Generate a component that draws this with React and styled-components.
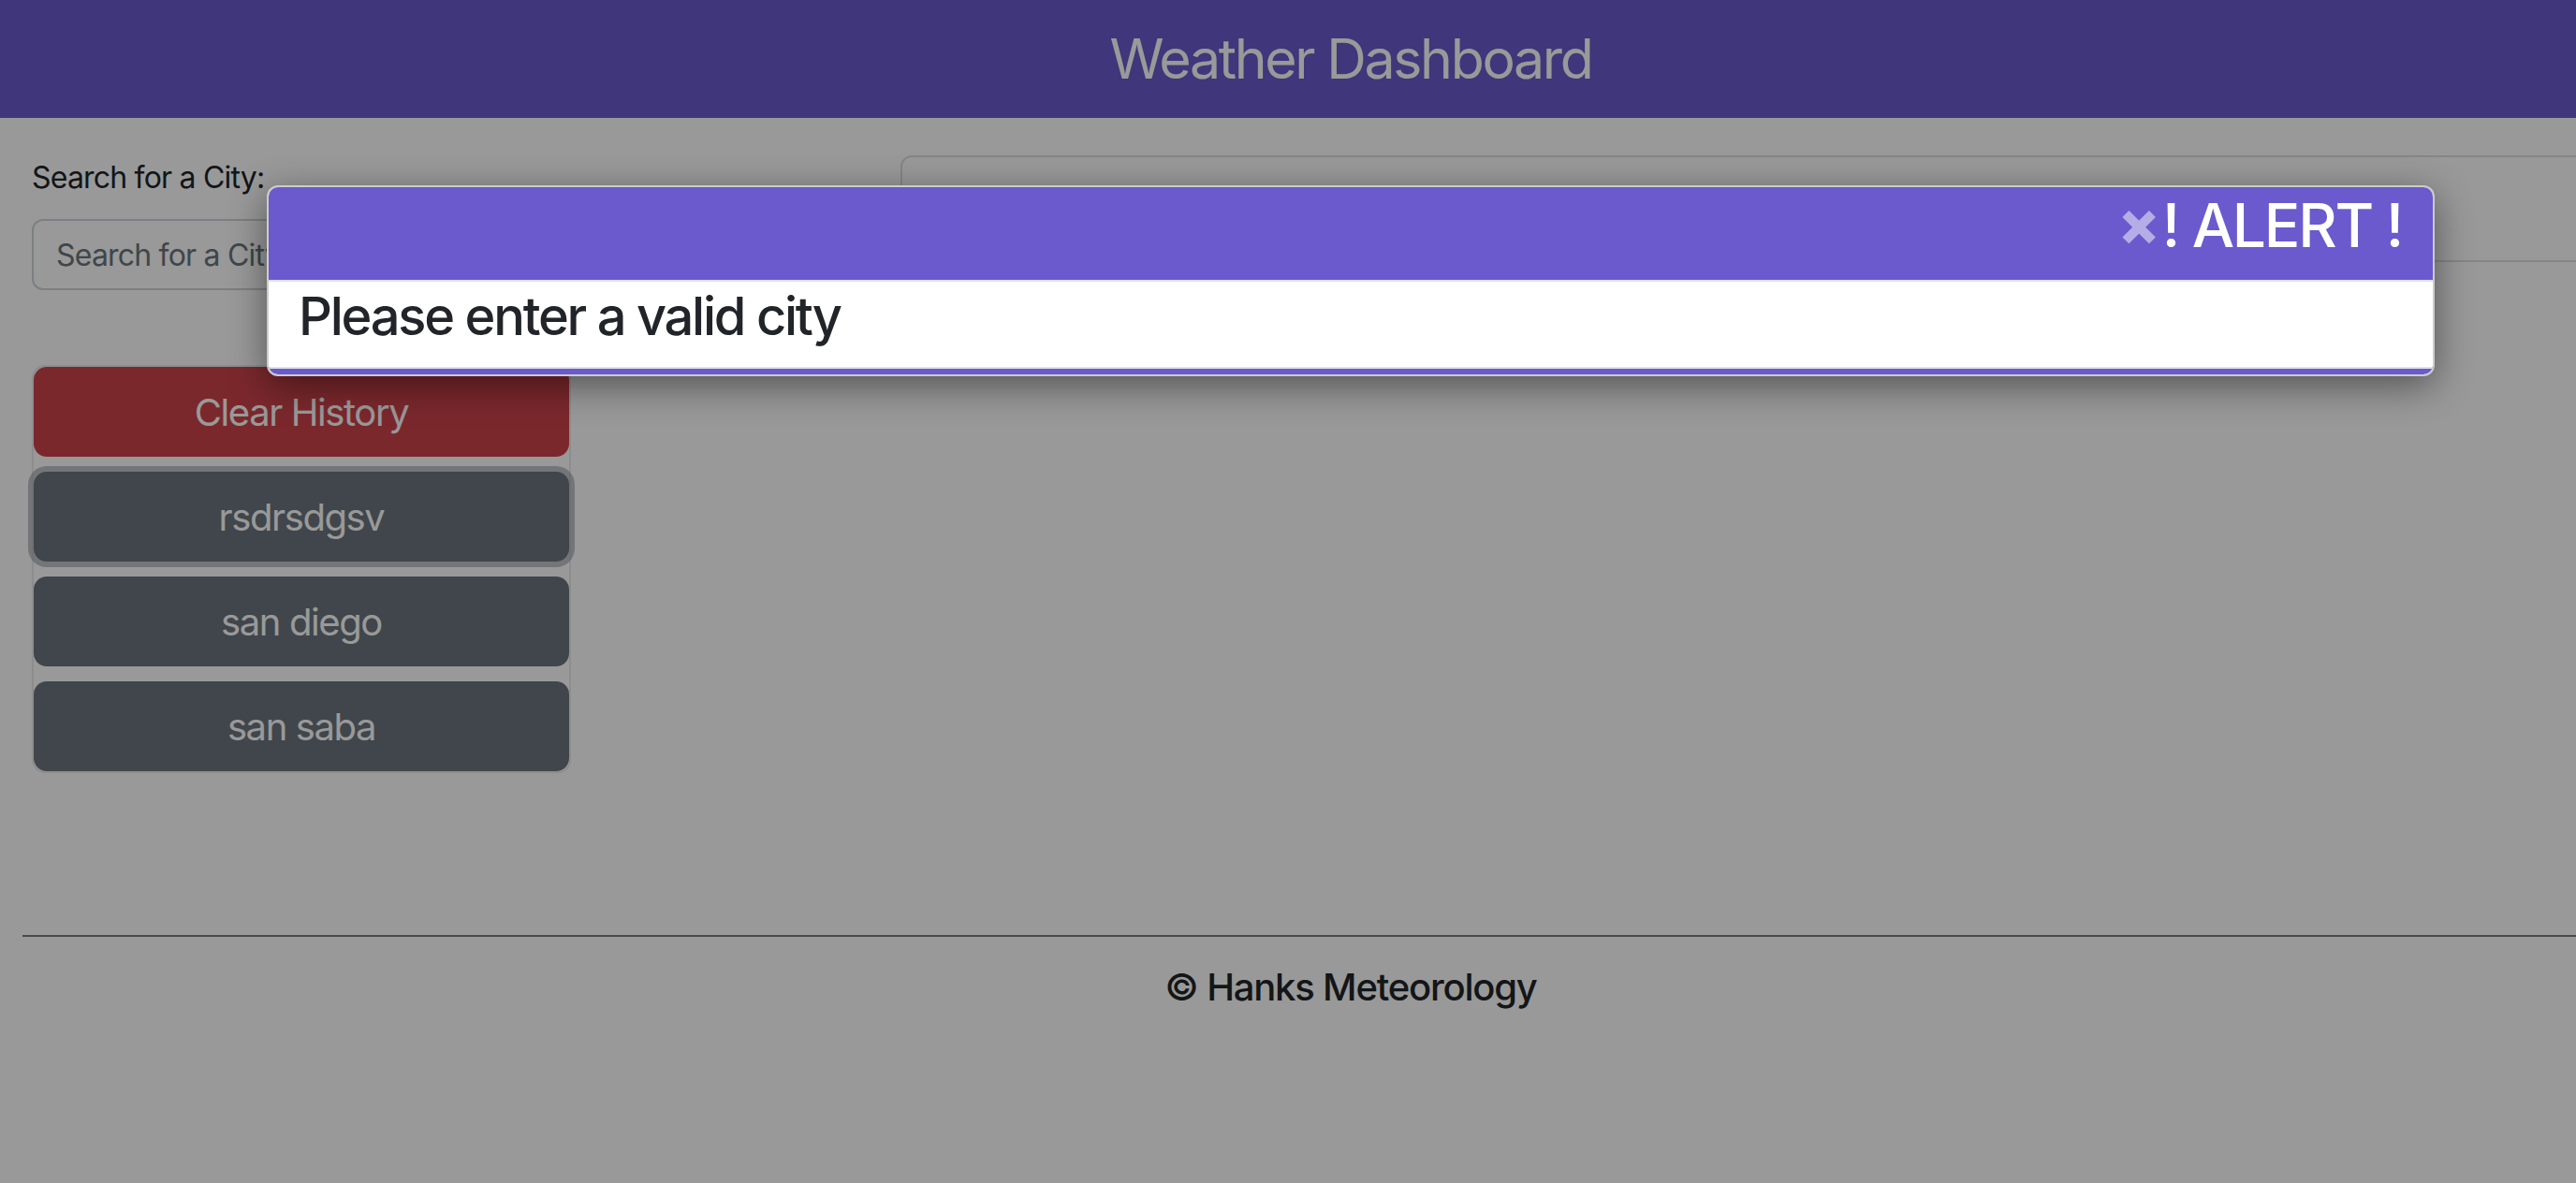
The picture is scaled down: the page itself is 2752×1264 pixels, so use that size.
import React from 'react';
import styled, { createGlobalStyle } from 'styled-components';

const GlobalStyle = createGlobalStyle`
  html, body {
    margin: 0;
    padding: 0;
    overflow: hidden;
  }
  body {
    background: #ffffff;
    color: #212529;
    font-family: Inter, "Noto Sans", "Liberation Sans", sans-serif;
  }
  * {
    box-sizing: border-box;
  }
`;

const Page = styled.div`
  position: relative;
  width: 2886px;
  min-height: 1264px;
  background: #ffffff;
`;

const Header = styled.header`
  height: 126px;
  background: #6a5acd;
  display: flex;
  align-items: center;
  justify-content: center;
`;

const Title = styled.h1`
  margin: 0;
  color: #ffffff;
  font-size: 59px;
  font-weight: 400;
  letter-spacing: -0.04em;
  line-height: 1.2;
`;

const Main = styled.main`
  display: flex;
  align-items: flex-start;
  padding: 40px 24px 0 34px;
`;

const SideColumn = styled.aside`
  width: 576px;
  display: flex;
  flex-direction: column;
`;

const Label = styled.label`
  font-size: 32px;
  line-height: 48px;
  margin-bottom: 20px;
  letter-spacing: -0.025em;
`;

const SearchInput = styled.input`
  height: 76px;
  width: 100%;
  padding: 0 24px;
  border: 2px solid #ced4da;
  border-radius: 12px;
  font-family: inherit;
  font-size: 32px;
  letter-spacing: -0.025em;
  color: #212529;
  background: #ffffff;
  &::placeholder {
    color: #6c757d;
  }
`;

const History = styled.div`
  margin-top: 80px;
  display: flex;
  flex-direction: column;
  gap: 16px;
  border: 2px solid #ececec;
  border-radius: 14px;
`;

const HistoryButton = styled.button`
  height: 96px;
  width: 100%;
  border: 0;
  border-radius: 14px;
  background: ${(p) => (p.$danger ? '#cd444c' : '#6c757d')};
  color: #ffffff;
  font-family: inherit;
  font-size: 40px;
  letter-spacing: -0.035em;
  box-shadow: ${(p) => (p.$focused ? '0 0 0 6px rgba(130, 138, 145, 0.5)' : 'none')};
`;

const ForecastCard = styled.section`
  flex: 1;
  margin-left: 352px;
  height: 114px;
  border: 2px solid #dfdfdf;
  border-radius: 12px;
`;

const Footer = styled.footer`
  margin-top: 173px;
  text-align: center;
`;

const Rule = styled.hr`
  margin: 0 24px;
  border: 0;
  border-top: 2px solid #7b7b7b;
`;

const Credit = styled.p`
  margin: 24px 0 0;
  font-size: 40px;
  font-weight: 500;
  line-height: 1.5;
  letter-spacing: -0.03em;
  color: #212529;
`;

const Backdrop = styled.div`
  position: absolute;
  inset: 0;
  background: rgba(0, 0, 0, 0.4);
  display: flex;
  justify-content: center;
  align-items: flex-start;
  padding-top: 198px;
`;

const Modal = styled.div`
  width: 2316px;
  background: #ffffff;
  border: 2px solid rgba(0, 0, 0, 0.2);
  border-radius: 12px;
  overflow: hidden;
  box-shadow: 0 10px 40px rgba(0, 0, 0, 0.45);
`;

const ModalHeader = styled.div`
  height: 101px;
  background: #6a5acd;
  border-bottom: 2px solid #dee2e6;
  display: flex;
  justify-content: flex-end;
  align-items: flex-start;
  padding: 3px 33px 0;
`;

const CloseButton = styled.button`
  border: 0;
  background: none;
  padding: 0 2px 0 0;
  margin-top: -4px;
  color: #ffffff;
  opacity: 0.5;
  font-family: inherit;
  font-size: 66px;
  font-weight: 800;
  line-height: 1.2;
`;

const ModalTitle = styled.h2`
  margin: 0;
  color: #ffffff;
  font-size: 64px;
  font-weight: 500;
  line-height: 1.2;
  letter-spacing: -0.035em;
`;

const ModalBody = styled.div`
  padding: 4px 32px 20px;
`;

const Message = styled.h3`
  margin: 0;
  font-size: 56px;
  font-weight: 500;
  line-height: 1.2;
  letter-spacing: -0.04em;
  color: #212529;
`;

const ModalFooter = styled.div`
  height: 8px;
  background: #6a5acd;
  border-top: 2px solid #dee2e6;
`;

const cities = ['rsdrsdgsv', 'san diego', 'san saba'];

const App = () => {
  return (
    <>
      <GlobalStyle />
      <Page>
        <Header>
          <Title>Weather Dashboard</Title>
        </Header>
        <Main>
          <SideColumn>
            <Label htmlFor="city">Search for a City:</Label>
            <SearchInput id="city" placeholder="Search for a City" />
            <History>
              <HistoryButton $danger>Clear History</HistoryButton>
              {cities.map((city, i) => (
                <HistoryButton key={city} $focused={i === 0}>
                  {city}
                </HistoryButton>
              ))}
            </History>
          </SideColumn>
          <ForecastCard />
        </Main>
        <Footer>
          <Rule />
          <Credit>© Hanks Meteorology</Credit>
        </Footer>
        <Backdrop>
          <Modal>
            <ModalHeader>
              <CloseButton>×</CloseButton>
              <ModalTitle>! ALERT !</ModalTitle>
            </ModalHeader>
            <ModalBody>
              <Message>Please enter a valid city</Message>
            </ModalBody>
            <ModalFooter />
          </Modal>
        </Backdrop>
      </Page>
    </>
  );
};

export default App;
